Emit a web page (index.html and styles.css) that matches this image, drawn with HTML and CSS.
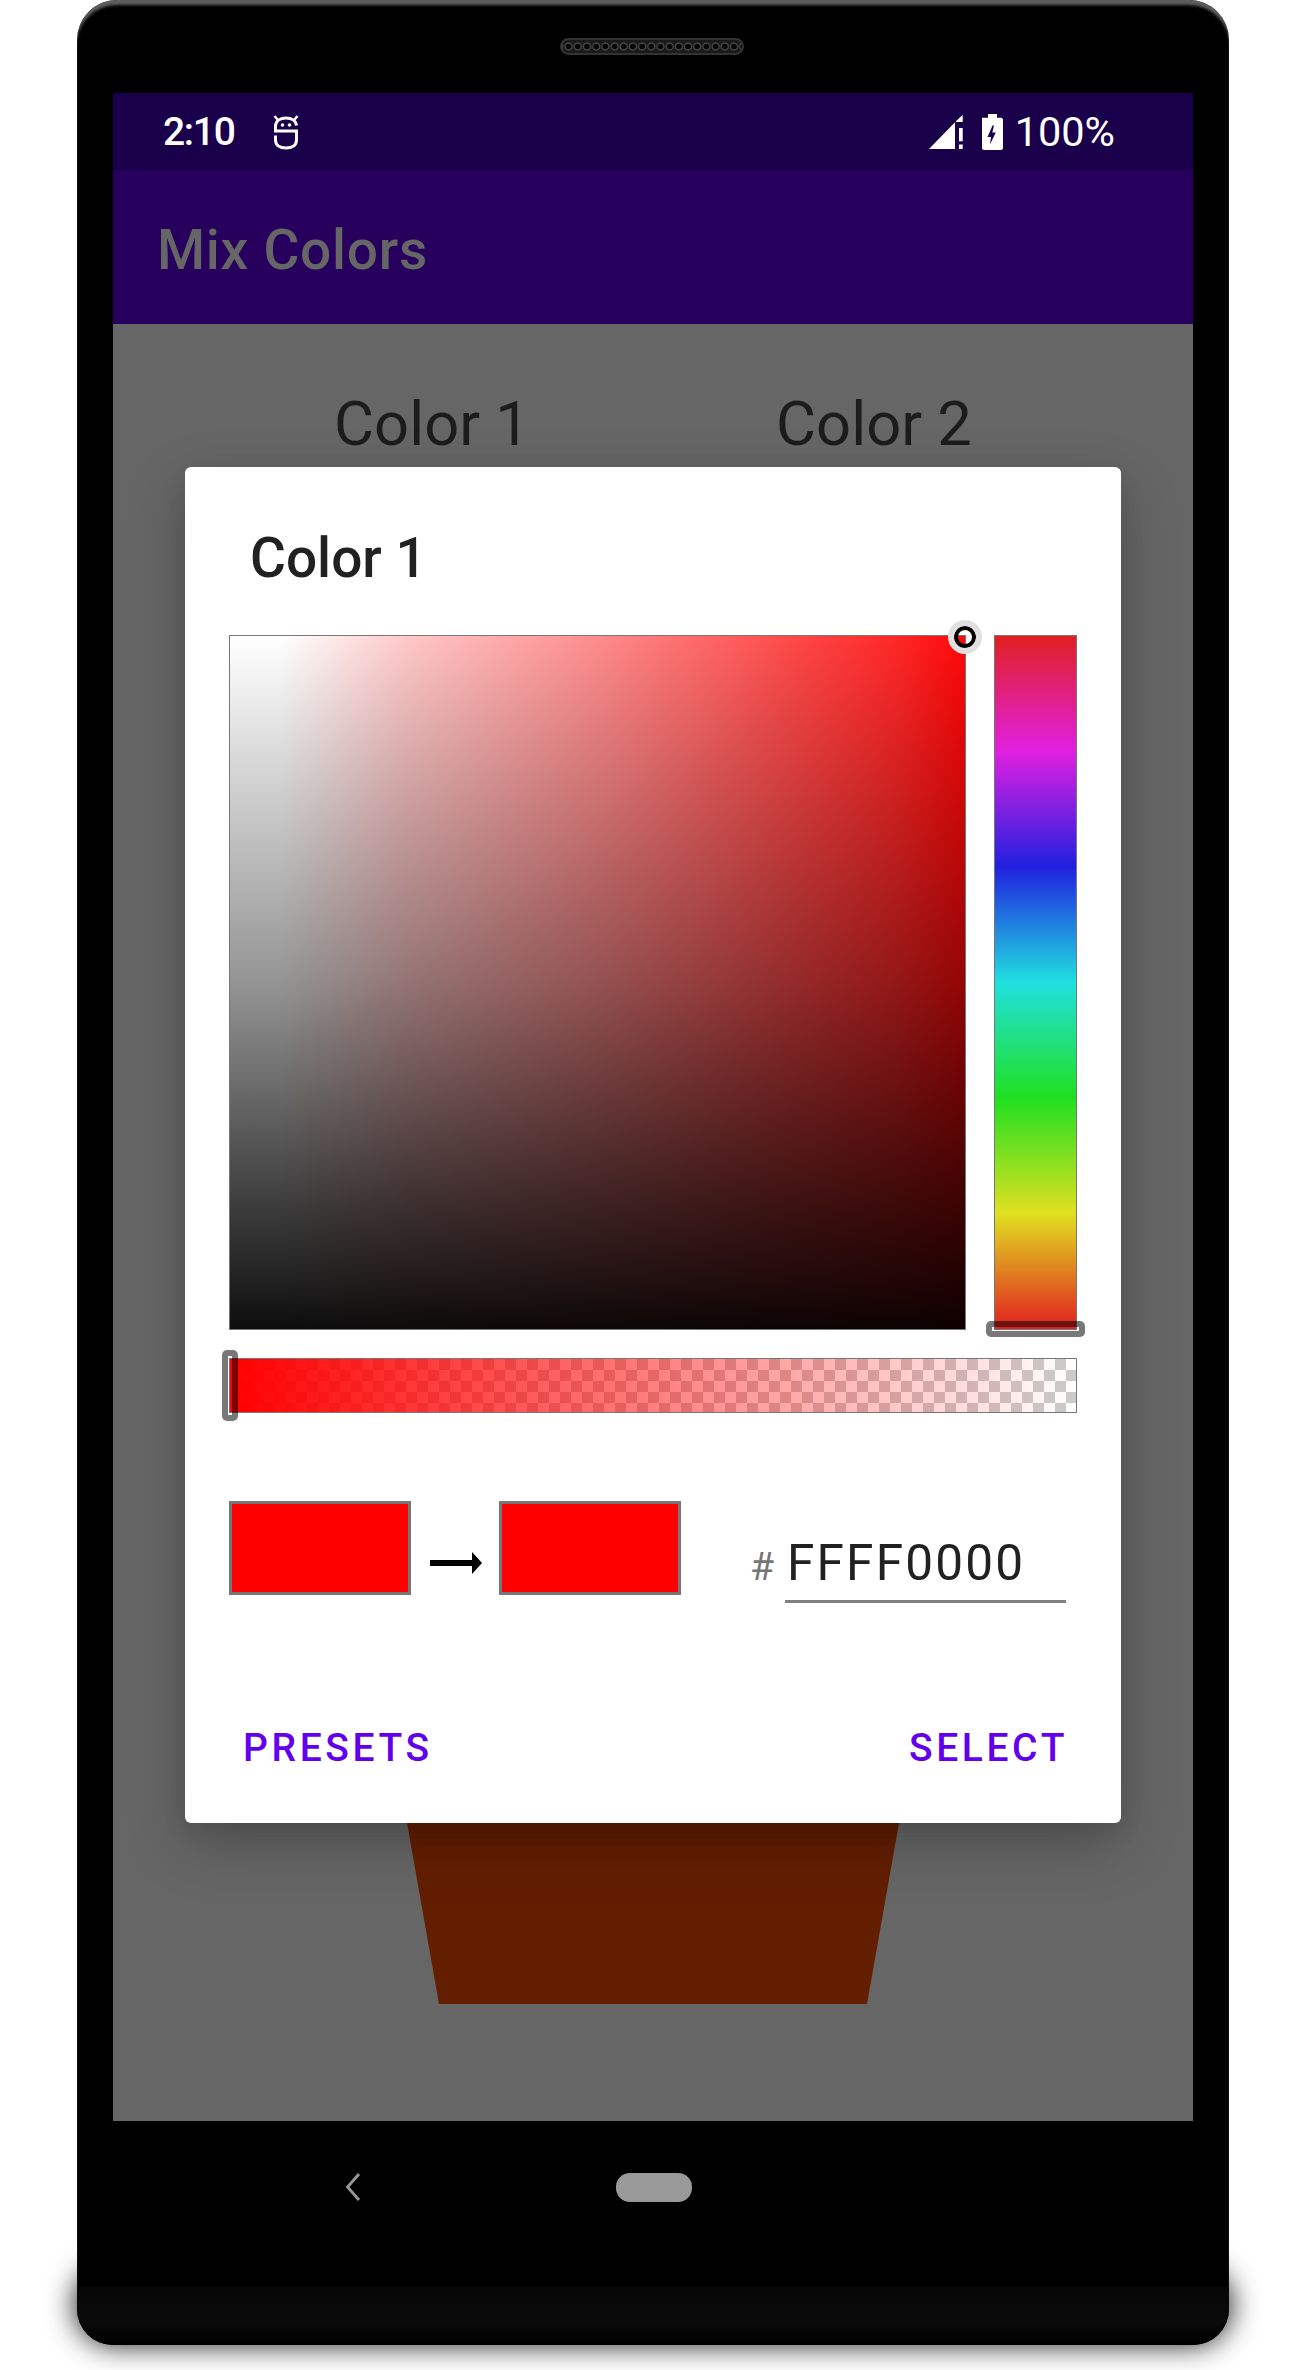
FILE: index.html
```html
<!doctype html>
<html lang="en">
<head>
  <meta charset="utf-8">
  <title>Mix Colors</title>
  <meta name="viewport" content="width=device-width, initial-scale=1">

  <link rel="stylesheet" href="styles.css">
</head>

<body>
  <div class="phone">
    <div class="phone_shadow"></div>

    <div class="bezel_top">
      <div class="speaker"></div>
    </div>

    <div class="screen">
      <div class="status_bar">
        <div class="status_group">
          <span class="status_time">2:10</span>
          <svg class="icon_debug" viewBox="0 0 40 44" width="40" height="44">
            <path d="M31.5 15.5C31 10.500 26.500 8 21 8C15.500 8 11 10.500 10.500 15.500V21H31.500V30C31.500 35.500 27 38 21 38C15 38 10.500 35.500 10.500 30V25.500" fill="none" stroke="#fff" stroke-width="3"/>
            <path d="M9.500 6L12.500 9.500M32.500 6L29.500 9.500" fill="none" stroke="#fff" stroke-width="2.400"/>
            <circle cx="17.500" cy="15" r="1.800" fill="#fff"/>
            <circle cx="24.500" cy="15" r="1.800" fill="#fff"/>
          </svg>
        </div>
        <div class="status_group">
          <svg class="icon_signal" viewBox="0 0 48 48" width="48" height="48">
            <path d="M9 41H35V14.300Z" fill="#fff"/>
            <path d="M36 14V13.300L42.700 6.700V14Z" fill="#fff"/>
            <rect x="39" y="20" width="3.700" height="13.300" fill="#fff"/>
            <rect x="39" y="36.500" width="3.700" height="4.500" fill="#fff"/>
          </svg>
          <svg class="icon_battery" viewBox="0 0 24 48" width="24" height="48">
            <path d="M2 9.700H8V6H17V9.700H21C22 9.700 23 10.700 23 11.700V40C23 41 22 42 21 42H4C3 42 2 41 2 40Z" fill="#fff"/>
            <path d="M12.500 17.500L7.500 29H11L10 36.500L15.800 24.500H12.300L14 17.500Z" fill="#1a004b"/>
          </svg>
          <span class="status_battery">100%</span>
        </div>
      </div>

      <div class="app_bar">Mix Colors</div>

      <div class="content">
        <div class="color_labels">
          <span class="color_label">Color 1</span>
          <span class="color_label">Color 2</span>
        </div>
        <div class="mix_cup"></div>
      </div>

      <div class="dialog">
        <div class="dialog_title">Color 1</div>

        <div class="picker_row">
          <div class="panel_sv">
            <div class="selector_sv"></div>
          </div>
          <div class="panel_hue">
            <div class="tracker_hue"></div>
          </div>
        </div>

        <div class="panel_alpha">
          <div class="panel_alpha_fill"></div>
          <div class="tracker_alpha"></div>
        </div>

        <div class="preview_row">
          <div class="swatch"></div>
          <svg class="icon_arrow" viewBox="0 0 52 24" width="52" height="24">
            <path d="M0 9H42V1L52 12L42 23V15H0Z" fill="#000"/>
          </svg>
          <div class="swatch"></div>
          <div class="hex_field">
            <span class="hex_hash">#</span>
            <span class="hex_value">FFFF0000</span>
          </div>
        </div>

        <div class="dialog_buttons">
          <span class="btn_text">PRESETS</span>
          <span class="btn_text">SELECT</span>
        </div>
      </div>
    </div>

    <div class="nav_bar">
      <svg class="icon_back" viewBox="0 0 18 28" width="18" height="28">
        <path d="M15 1L3.500 14L15 27" fill="none" stroke="#999" stroke-width="2.800"/>
      </svg>
      <div class="nav_home"></div>
    </div>
    <div class="chin"></div>
  </div>
</body>
</html>
```

FILE: styles.css
```css
html {
  background: #fff;
}

body {
  margin: 0;
  padding: 0 0 25px;
  font-family: Roboto, "Liberation Sans", sans-serif;
}

.phone {
  position: relative;
  box-sizing: border-box;
  width: 1152px;
  height: 2345px;
  margin-left: 77px;
  padding: 0 36px;
  background: #000;
  border-radius: 40px 40px 36px 36px;
  box-shadow: inset 0 6px 3px -1px #5e5e5e;
}

.phone_shadow {
  position: absolute;
  z-index: -1;
  left: 8px;
  right: 8px;
  bottom: 10px;
  height: 60px;
  border-radius: 30px;
  box-shadow: 0 0 28px 11px rgba(0, 0, 0, 0.85);
}

.bezel_top {
  display: flex;
  justify-content: center;
  height: 93px;
}

.speaker {
  box-sizing: border-box;
  width: 184px;
  height: 17px;
  margin-top: 38px;
  margin-right: 2px;
  padding: 3px 6px;
  border: 2px solid #333;
  border-radius: 9px;
  background: radial-gradient(circle at center, #050505 0, #050505 2.5px, #4a4a4a 3.2px, #4a4a4a 3.8px, #1a1a1a 4.4px) 4px 0 / 9.2px 100% repeat-x;
  background-origin: border-box;
  background-color: #111;
}

.screen {
  position: relative;
  display: flex;
  flex-direction: column;
  width: 1080px;
  height: 2028px;
  background: #666;
}

.status_bar {
  display: flex;
  justify-content: space-between;
  align-items: center;
  box-sizing: border-box;
  height: 77px;
  padding: 0 78px 0 50px;
  background: #1a004b;
  color: #fff;
}

.status_group {
  display: flex;
  align-items: center;
}

.status_time {
  font-size: 39px;
  font-weight: 500;
  letter-spacing: -1.3px;
}

.icon_debug {
  margin-left: 30px;
}

.icon_battery {
  margin-left: 12px;
}

.status_battery {
  margin-left: 11px;
  font-size: 41.5px;
}

.app_bar {
  box-sizing: border-box;
  height: 154px;
  padding-left: 44px;
  background: #27005e;
  color: #666;
  font-size: 55px;
  font-weight: 500;
  letter-spacing: 0.75px;
  line-height: 160px;
}

.content {
  display: flex;
  flex: 1;
  flex-direction: column;
  align-items: center;
}

.color_labels {
  display: grid;
  grid-template-columns: 442px 442px;
  width: 884px;
  margin-top: 61px;
}

.color_label {
  color: #1c1c1c;
  font-size: 61.5px;
  line-height: 78px;
  text-align: center;
}

.mix_cup {
  width: 606px;
  height: 504px;
  margin-top: auto;
  margin-bottom: 117px;
  background: #631e00;
  clip-path: polygon(0 0, 100% 0, calc(100% - 89px) 100%, 89px 100%);
}

.dialog {
  position: absolute;
  top: 374px;
  left: 72px;
  box-sizing: border-box;
  width: 936px;
  height: 1356px;
  padding: 0 44px;
  background: #fff;
  border-radius: 6px;
  box-shadow: 0 22px 60px rgba(0, 0, 0, 0.22), 0 8px 24px rgba(0, 0, 0, 0.1);
}

.dialog_title {
  height: 168px;
  padding-left: 21px;
  color: #212121;
  font-size: 55px;
  font-weight: 500;
  line-height: 183px;
}

.picker_row {
  display: flex;
  gap: 28px;
  height: 695px;
}

.panel_sv {
  position: relative;
  box-sizing: border-box;
  width: 737px;
  border: 1px solid #777;
  background:
    linear-gradient(to bottom, rgba(0, 0, 0, 0), rgba(0, 0, 0, 0.15) 17.5%, rgba(0, 0, 0, 0.42) 50%, rgba(0, 0, 0, 0.77) 82.6%, rgba(0, 0, 0, 0.87) 93%, rgba(0, 0, 0, 0.95)),
    linear-gradient(to right, #fff, #fff 7%, #ffc8c8 24%, #ff8c8c 50%, #ff4c4c 75%, #ff2626 91%, #ff0808);
}

.selector_sv {
  position: absolute;
  top: -16px;
  right: -17px;
  box-sizing: border-box;
  width: 34px;
  height: 34px;
  border: 6px solid #e0e0e0;
  border-radius: 50%;
  box-shadow: inset 0 0 0 4px #000;
}

.panel_hue {
  position: relative;
  box-sizing: border-box;
  width: 83px;
  border: 1px solid #777;
  background: linear-gradient(to bottom, #e02020, #e020e0, #2020e0, #20e0e0, #20e020, #e0e020, #e02020);
}

.tracker_hue {
  position: absolute;
  left: -9px;
  right: -9px;
  bottom: -8px;
  box-sizing: border-box;
  height: 16px;
  border: 6px solid rgba(0, 0, 0, 0.53);
  border-radius: 5px;
}

.panel_alpha {
  position: relative;
  box-sizing: border-box;
  height: 55px;
  margin-top: 28px;
  border: 1px solid #777;
  background: repeating-conic-gradient(#ccc 0 25%, #fff 0 50%) 0 0 / 22px 22px;
}

.panel_alpha_fill {
  height: 100%;
  background: linear-gradient(to right, #f00, rgba(255, 0, 0, 0));
}

.tracker_alpha {
  position: absolute;
  top: -9px;
  bottom: -9px;
  left: -8px;
  box-sizing: border-box;
  width: 16px;
  border: 6px solid rgba(0, 0, 0, 0.53);
  border-radius: 5px;
}

.preview_row {
  display: flex;
  align-items: flex-start;
  height: 94px;
  margin-top: 88px;
}

.swatch {
  box-sizing: border-box;
  width: 182px;
  height: 94px;
  border: 3px solid #777;
  background: #f00;
}

.icon_arrow {
  margin: 50px 17px 0 19px;
}

.hex_field {
  display: flex;
  align-items: baseline;
  margin-left: 69px;
  margin-top: 32px;
}

.hex_hash {
  width: 35px;
  color: #757575;
  font-size: 39px;
}

.hex_value {
  box-sizing: border-box;
  width: 281px;
  height: 70px;
  padding-left: 2px;
  border-bottom: 3px solid #808080;
  color: #212121;
  font-size: 49.5px;
  letter-spacing: 2.2px;
  line-height: 61px;
}

.dialog_buttons {
  display: flex;
  justify-content: space-between;
  margin-top: 130px;
  padding: 0 9px 0 14px;
}

.btn_text {
  color: #6200ee;
  font-size: 39px;
  font-weight: 500;
  letter-spacing: 3.6px;
  line-height: 46px;
}

.nav_bar {
  position: relative;
  display: flex;
  align-items: flex-start;
  height: 166px;
  padding-top: 52px;
  box-sizing: border-box;
}

.icon_back {
  margin-left: 231px;
}

.nav_home {
  width: 76px;
  height: 29px;
  margin-left: 254px;
  background: #999;
  border-radius: 14px;
}

.chin {
  height: 58px;
  margin: 0 -36px;
  background: linear-gradient(to bottom, #070707, #0a0a0a 60%, #000);
  border-radius: 0 0 36px 36px;
}
```
